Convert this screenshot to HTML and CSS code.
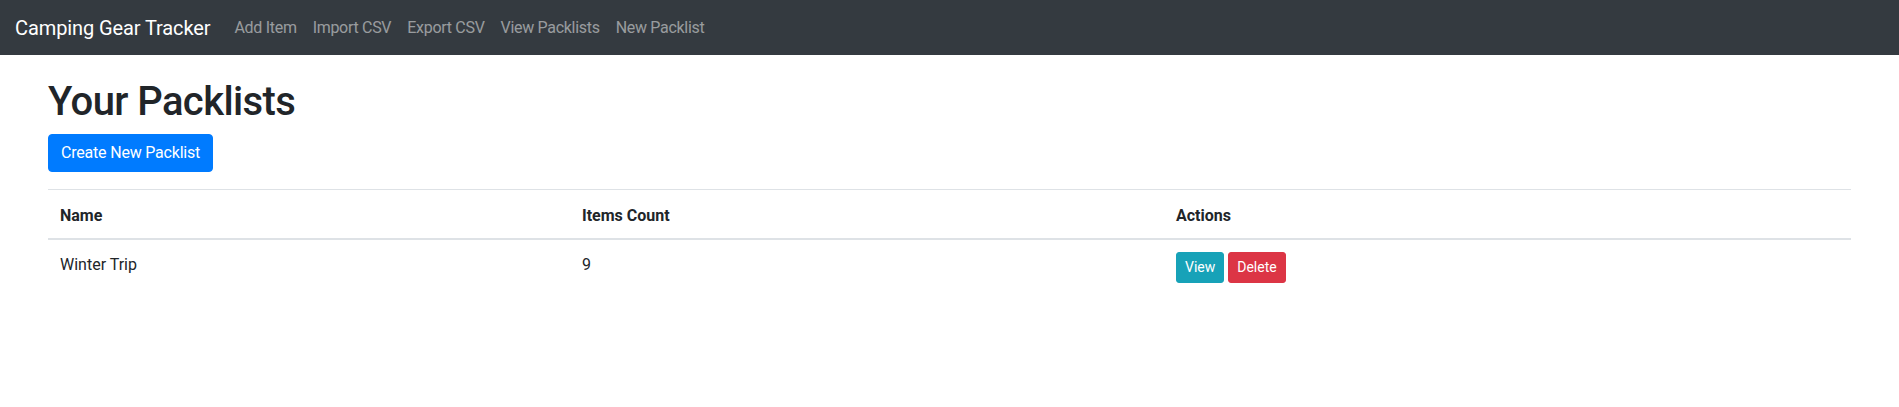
FILE: index.html
```html
<!DOCTYPE html>
<html lang="en">
<head>
<meta charset="utf-8">
<title>Camping Gear Tracker</title>
<link rel="stylesheet" href="styles.css">
</head>
<body>
<nav class="navbar">
  <a class="brand" href="#">Camping Gear Tracker</a>
  <ul class="nav">
    <li><a class="nav-link" href="#">Add Item</a></li>
    <li><a class="nav-link" href="#">Import CSV</a></li>
    <li><a class="nav-link" href="#">Export CSV</a></li>
    <li><a class="nav-link" href="#">View Packlists</a></li>
    <li><a class="nav-link" href="#">New Packlist</a></li>
  </ul>
</nav>
<main class="container">
  <h1 class="title">Your Packlists</h1>
  <a class="btn btn-primary" href="#">Create New Packlist</a>
  <table class="table">
    <colgroup>
      <col class="col-name">
      <col class="col-count">
      <col class="col-actions">
    </colgroup>
    <thead>
      <tr><th>Name</th><th>Items Count</th><th>Actions</th></tr>
    </thead>
    <tbody>
      <tr>
        <td class="text-cell">Winter Trip</td>
        <td class="text-cell">9</td>
        <td class="action-cell"><a class="btn btn-sm btn-info" href="#">View</a> <a class="btn btn-sm btn-danger" href="#">Delete</a></td>
      </tr>
    </tbody>
  </table>
</main>
</body>
</html>
```

FILE: styles.css
```css
* { box-sizing: border-box; }
html, body {
  margin: 0;
  padding: 0;
}
body {
  font-family: "Segoe UI", Roboto, "Liberation Sans", sans-serif;
  font-size: 16px;
  line-height: 1.5;
  color: #212529;
  background: #fff;
}
a { text-decoration: none; }

.navbar {
  display: flex;
  align-items: center;
  background: #343a40;
  padding: 8px 16px 8px 15px;
  height: 55px;
}
.brand {
  color: #fff;
  font-size: 20px;
  line-height: 30px;
  padding: 5px 0;
  margin-right: 16px;
  white-space: nowrap;
  letter-spacing: -0.1px;
}
.nav {
  display: flex;
  list-style: none;
  margin: 0;
  padding: 0;
}
.nav-link {
  display: block;
  padding: 8px;
  color: rgba(255, 255, 255, 0.5);
  letter-spacing: -0.3px;
}

.container {
  padding: 0 48px;
}
.title {
  font-size: 40px;
  font-weight: 500;
  line-height: 1.2;
  margin: 23px 0 8px;
  letter-spacing: -0.6px;
}

.btn {
  display: inline-block;
  font-size: 16px;
  line-height: 24px;
  padding: 6px 12px;
  border: 1px solid transparent;
  border-radius: 4px;
  color: #fff;
  vertical-align: middle;
  letter-spacing: -0.2px;
}
.btn-primary { background: #007bff; border-color: #007bff; }
.btn-info { background: #17a2b8; border-color: #17a2b8; }
.btn-danger { background: #dc3545; border-color: #dc3545; }
.btn-sm {
  font-size: 14px;
  line-height: 21px;
  padding: 4px 8px;
  border-radius: 3px;
  letter-spacing: 0;
}

.table {
  width: 100%;
  border-collapse: collapse;
  table-layout: fixed;
  margin-top: 17px;
}
.col-name { width: 522px; }
.col-count { width: 594px; }
.table th, .table td {
  padding: 12px;
  text-align: left;
  vertical-align: top;
  border-top: 1px solid #dee2e6;
}
.table th {
  font-weight: 700;
  padding: 14px 12px 10px;
}
.table thead th {
  vertical-align: bottom;
  border-bottom: 2px solid #dee2e6;
}
.table tbody tr:first-child td { border-top: none; }
.table td.text-cell { padding: 13px 12px 11px; }
```
